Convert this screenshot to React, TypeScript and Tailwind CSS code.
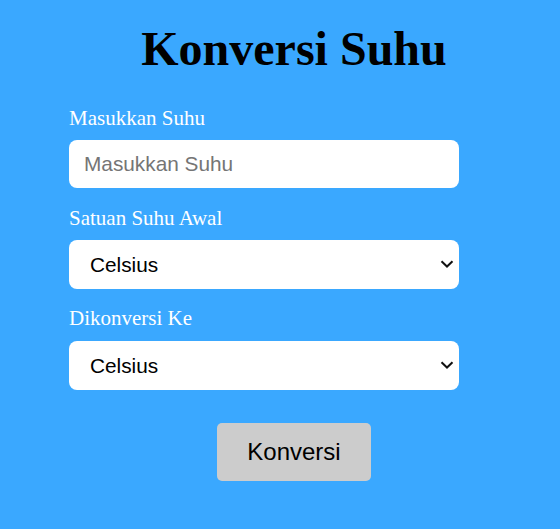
import { useState } from "react";

const serif = "font-['Liberation_Serif','Times_New_Roman',serif]";
const sans = "font-['Liberation_Sans',Arial,sans-serif]";

const units = ["Celsius", "Fahrenheit", "Kelvin"];

function UnitSelect({ value, onChange }: { value: string; onChange: (v: string) => void }) {
  return (
    <div className="relative w-[390px]">
      <select
        value={value}
        onChange={(e) => onChange(e.target.value)}
        className={`h-[49px] w-full appearance-none rounded-lg bg-white pl-[21px] pr-8 text-[20.8px] text-black outline-none ${sans}`}
      >
        {units.map((u) => (
          <option key={u}>{u}</option>
        ))}
      </select>
      <svg
        viewBox="0 0 14 8"
        className="pointer-events-none absolute right-[5px] top-[20px] h-[8px] w-[14px]"
        fill="none"
        stroke="#111"
        strokeWidth="2"
      >
        <path d="M1.5 1.2 7 6.5 12.5 1.2" />
      </svg>
    </div>
  );
}

export default function App() {
  const [suhu, setSuhu] = useState("");
  const [dari, setDari] = useState("Celsius");
  const [ke, setKe] = useState("Celsius");

  return (
    <div className={`min-h-[529px] w-[560px] bg-[#3aa8ff] ${serif}`}>
      <div className="ml-[69px] w-[450px] pt-[22px]">
        <h1 className="text-center text-[48px] font-bold leading-[53px] text-black">Konversi Suhu</h1>

        <div className="mt-[31px] flex flex-col">
          <label className="text-[21px] leading-[24px] text-white">Masukkan Suhu</label>
          <input
            value={suhu}
            onChange={(e) => setSuhu(e.target.value)}
            placeholder="Masukkan Suhu"
            className={`mt-[10px] h-[48px] w-[390px] rounded-lg bg-white px-[15px] text-[20.8px] text-black placeholder:text-[#757575] outline-none ${sans}`}
          />

          <label className="mt-[18px] text-[21px] leading-[24px] text-white">Satuan Suhu Awal</label>
          <div className="mt-[10px]">
            <UnitSelect value={dari} onChange={setDari} />
          </div>

          <label className="mt-[17px] text-[21px] leading-[24px] text-white">Dikonversi Ke</label>
          <div className="mt-[11px]">
            <UnitSelect value={ke} onChange={setKe} />
          </div>

          <button
            className={`mx-auto mt-[33px] h-[58px] w-[154px] rounded-[5px] bg-[#cccccc] text-[24px] text-black ${sans}`}
          >
            Konversi
          </button>
        </div>
      </div>
    </div>
  );
}
